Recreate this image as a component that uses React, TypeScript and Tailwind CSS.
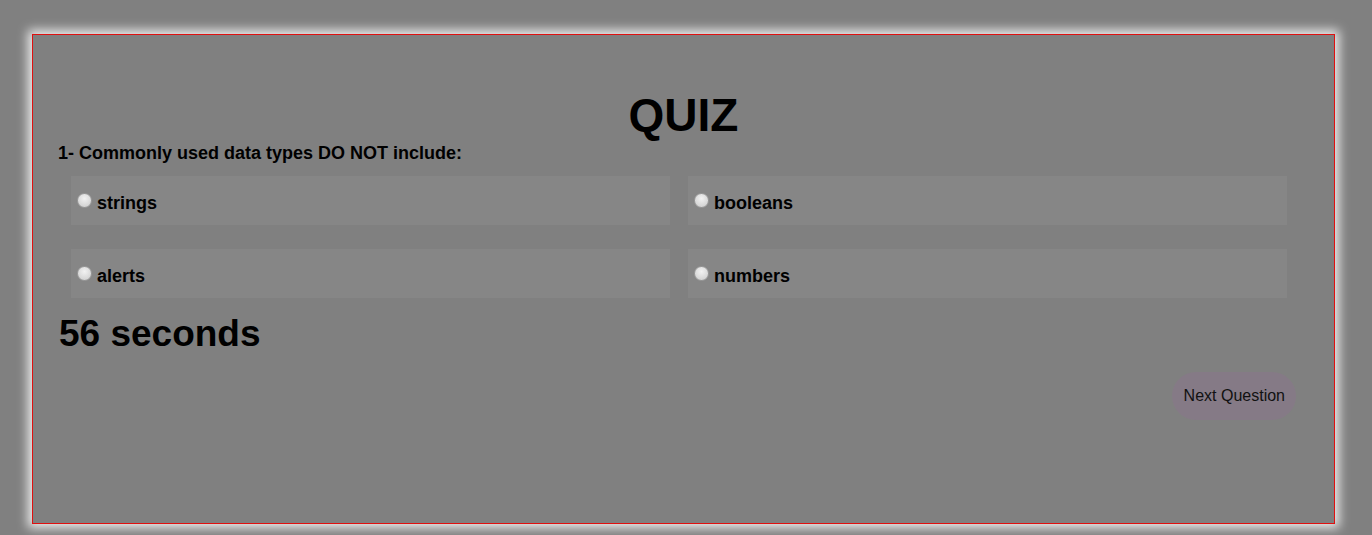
import React from "react";

const font = { fontFamily: '"Liberation Sans", Arial, sans-serif' };

function Option({ label }: { label: string }) {
  return (
    <div className="h-[49px] bg-[#868686] flex items-start pl-[6px]">
      <span className="mt-[17px] w-[15px] h-[15px] rounded-full border border-[#9a9a9a] bg-[radial-gradient(circle_at_50%_35%,#f2f2f2,#d6d6d6_70%,#c4c4c4)] shrink-0" />
      <span className="ml-[5px] mt-[15px] text-[18px] leading-[24px] font-bold text-black">{label}</span>
    </div>
  );
}

export default function App() {
  return (
    <div className="w-full h-[535px] bg-[#808080] pt-[34px] pl-[32px]" style={font}>
      <div className="w-[1303px] h-[490px] border border-[#e01010] shadow-[0_0_10px_4px_rgba(255,255,255,0.85)] pl-[25px]">
        <h1 className="mt-[56px] text-center text-[46px] leading-[48px] font-bold text-black pr-[25px]">QUIZ</h1>
        <p className="mt-[2px] text-[18px] leading-[24px] font-bold text-black">1- Commonly used data types DO NOT include:</p>
        <div className="mt-[11px] ml-[13px] w-[1216px] grid grid-cols-[599px_599px] gap-x-[18px] gap-y-[24px]">
          <Option label="strings" />
          <Option label="booleans" />
          <Option label="alerts" />
          <Option label="numbers" />
        </div>
        <div className="mt-[14px] text-[37px] leading-[44px] font-bold text-black pl-[1px]">56 seconds</div>
        <div className="flex justify-end pr-[38px] mt-[16px]">
          <button className="h-[48px] pl-[12px] pr-[11px] rounded-full bg-[#857a86] text-[16px] text-[#111] font-normal">Next Question</button>
        </div>
      </div>
    </div>
  );
}
